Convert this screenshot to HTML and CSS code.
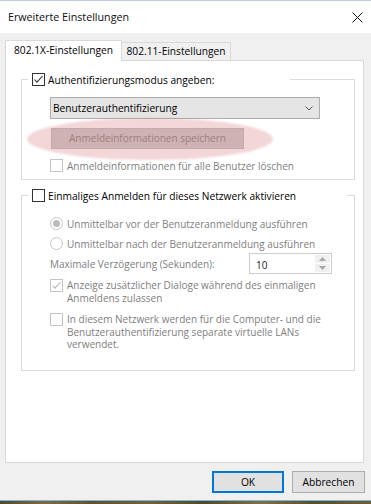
FILE: index.html
```html
<!DOCTYPE html>
<html lang="de">
<head>
<meta charset="utf-8">
<title>Erweiterte Einstellungen</title>
<link rel="stylesheet" href="styles.css">
</head>
<body>
<div class="window">
  <div class="titlebar">
    <span class="title">Erweiterte Einstellungen</span>
    <svg class="close" width="11" height="11" viewBox="0 0 11 11"><path d="M0.5 0.5 L10.5 10.5 M10.5 0.5 L0.5 10.5" stroke="#111" stroke-width="1" fill="none"/></svg>
  </div>
  <div class="client">
    <div class="tabs">
      <div class="tab tab-active">802.1X-Einstellungen</div>
      <div class="tab tab-inactive">802.11-Einstellungen</div>
    </div>
    <div class="panel">
      <fieldset class="group group-auth">
        <legend class="legend legend-auth">
          <span class="legend-inner">
            <svg class="box" width="13" height="13" viewBox="0 0 13 13"><rect x="0.5" y="0.5" width="12" height="12" fill="#fff" stroke="#333"/><path d="M2.5 6.5 L5 9.2 L10.5 3" stroke="#333" stroke-width="1.1" fill="none"/></svg>
            <span class="legend-text">Authentifizierungsmodus angeben:</span>
          </span>
        </legend>
        <div class="group-body body-auth">
          <div class="select">
            <span>Benutzerauthentifizierung</span>
            <svg class="chev" width="8" height="5" viewBox="0 0 8 5"><path d="M0.5 0.5 L4 4 L7.5 0.5" stroke="#555" stroke-width="1" fill="none"/></svg>
          </div>
          <div class="btn-wrap">
            <div class="btn-disabled">Anmeldeinformationen speichern</div>
            <div class="highlight"></div>
          </div>
          <div class="row row-single">
            <svg class="box" width="13" height="13" viewBox="0 0 13 13"><rect x="0.5" y="0.5" width="12" height="12" fill="#fff" stroke="#c4c4c4"/></svg>
            <span class="label dis">Anmeldeinformationen für alle Benutzer löschen</span>
          </div>
        </div>
      </fieldset>

      <fieldset class="group group-sso">
        <legend class="legend legend-sso">
          <span class="legend-inner">
            <svg class="box" width="13" height="13" viewBox="0 0 13 13"><rect x="0.5" y="0.5" width="12" height="12" fill="#fff" stroke="#333"/></svg>
            <span class="legend-text">Einmaliges Anmelden für dieses Netzwerk aktivieren</span>
          </span>
        </legend>
        <div class="group-body body-sso">
          <div class="row row-single row-radio1">
            <svg class="radio" width="13" height="13" viewBox="0 0 13 13"><circle cx="6.5" cy="6.5" r="6" fill="#fff" stroke="#c4c4c4"/><circle cx="6.5" cy="6.5" r="3.5" fill="#bcbcbc"/></svg>
            <span class="label dis">Unmittelbar vor der Benutzeranmeldung ausführen</span>
          </div>
          <div class="row row-single row-radio2">
            <svg class="radio" width="13" height="13" viewBox="0 0 13 13"><circle cx="6.5" cy="6.5" r="6" fill="#fff" stroke="#c4c4c4"/></svg>
            <span class="label dis">Unmittelbar nach der Benutzeranmeldung ausführen</span>
          </div>
          <div class="spin-row">
            <span class="spin-label dis">Maximale Verzögerung (Sekunden):</span>
            <div class="spin">
              <span class="spin-value">10</span>
              <div class="spin-buttons">
                <div class="spin-btn"><svg width="7" height="4" viewBox="0 0 7 4"><path d="M0 4 L3.5 0 L7 4 Z" fill="#a8a8a8"/></svg></div>
                <div class="spin-btn"><svg width="7" height="4" viewBox="0 0 7 4"><path d="M0 0 L3.5 4 L7 0 Z" fill="#a8a8a8"/></svg></div>
              </div>
            </div>
          </div>
          <div class="row row-multi row-dialogs">
            <svg class="box" width="13" height="13" viewBox="0 0 13 13"><rect x="0.5" y="0.5" width="12" height="12" fill="#fff" stroke="#c4c4c4"/><path d="M2.5 6.5 L5 9.2 L10.5 3" stroke="#b4b4b4" stroke-width="1.1" fill="none"/></svg>
            <span class="label dis">Anzeige zusätzlicher Dialoge während des einmaligen<br>Anmeldens zulassen</span>
          </div>
          <div class="row row-multi row-vlan">
            <svg class="box" width="13" height="13" viewBox="0 0 13 13"><rect x="0.5" y="0.5" width="12" height="12" fill="#fff" stroke="#c4c4c4"/></svg>
            <span class="label dis">In diesem Netzwerk werden für die Computer- und die<br>Benutzerauthentifizierung separate virtuelle LANs<br>verwendet.</span>
          </div>
        </div>
      </fieldset>
    </div>
    <div class="buttons">
      <div class="button button-default">OK</div>
      <div class="button">Abbrechen</div>
    </div>
  </div>
</div>
<div class="desktop"></div>
</body>
</html>
```

FILE: styles.css
```css
* { box-sizing: border-box; }

html, body {
  margin: 0;
  padding: 0;
}

body {
  width: 371px;
  height: 504px;
  overflow: hidden;
  font-family: "Open Sans", "Noto Sans", sans-serif;
  font-size: 10px;
  color: #000;
  background: #5d5535;
}

.window {
  height: 501px;
  border-top: 1px solid #bccde2;
  border-bottom: 1px solid #89afdb;
  background: #f0f0f0;
  display: flex;
  flex-direction: column;
}

.titlebar {
  height: 32px;
  flex: none;
  background: #fff;
  display: flex;
  align-items: center;
  justify-content: space-between;
  padding: 0 8px 0 8px;
}

.title {
  font-size: 10.7px;
  color: #111;
}

.close { display: block; }

.client {
  flex: 1;
  padding: 7px 7px 0 5px;
  display: flex;
  flex-direction: column;
}

.tabs {
  height: 20px;
  display: flex;
  align-items: flex-end;
  flex: none;
}

.tab {
  border: 1px solid #d9d9d9;
  border-bottom: none;
  text-align: center;
  white-space: nowrap;
  font-size: 10.2px;
}

.tab-active {
  width: 117px;
  height: 21px;
  margin-bottom: -1px;
  background: #fff;
  position: relative;
  z-index: 1;
  line-height: 19px;
}

.tab-inactive {
  width: 109px;
  height: 18px;
  border-left: none;
  background: #f0f0f0;
  line-height: 17px;
}

.panel {
  width: 359px;
  height: 403px;
  flex: none;
  border: 1px solid #d9d9d9;
  background: #fff;
  padding-left: 15px;
  display: flex;
  flex-direction: column;
}

.group {
  width: 334px;
  margin: 0;
  padding: 0;
  border: 1px solid #dcdcdc;
  min-inline-size: 0;
}

.group-auth { margin-top: 11px; }
.group-sso { margin-top: 8px; }

.legend {
  margin-left: 6px;
  padding: 0 0 0 4px;
  height: 15px;
}

.legend-auth { width: 262px; }
.legend-sso { width: 319px; }

.legend-inner {
  display: flex;
  align-items: center;
  height: 15px;
  gap: 3px;
  white-space: nowrap;
  font-size: 10.2px;
}

.box, .radio {
  display: block;
  flex: none;
}

.group-body {
  padding-left: 28px;
  display: flex;
  flex-direction: column;
}

.body-auth { padding-top: 10px; padding-bottom: 6px; }
.body-sso { padding-top: 13px; padding-bottom: 19px; }

.select {
  width: 270px;
  height: 22px;
  border: 1px solid #adadad;
  background: #e5e5e5;
  display: flex;
  align-items: center;
  justify-content: space-between;
  padding: 0 6px 0 2px;
  font-size: 10.2px;
}

.chev { display: block; }

.btn-wrap {
  position: relative;
  width: 193px;
  height: 21px;
  margin: 9px 0 0 1px;
}

.btn-disabled {
  height: 21px;
  border: 1px solid #bfbfbf;
  background: #cccccc;
  color: #838383;
  text-align: center;
  line-height: 19px;
}

.highlight {
  position: absolute;
  left: -24px;
  top: -10px;
  width: 246px;
  height: 42px;
  border-radius: 50%;
  background: rgba(214, 120, 126, 0.3);
  filter: blur(1px);
  pointer-events: none;
}

.row {
  display: flex;
  gap: 4px;
}

.row-single {
  height: 15px;
  align-items: center;
}

.body-auth .row-single { margin-top: 9px; }

.row-radio2 { margin-top: 5px; }

.row-multi {
  align-items: flex-start;
  line-height: 12.5px;
}

.row-dialogs { margin-top: 5px; }
.row-vlan { margin-top: 9px; }

.label { white-space: nowrap; }

.dis { color: #7e7e7e; }

.spin-row {
  margin-top: 2px;
  height: 21px;
  display: flex;
  align-items: center;
}

.spin-label {
  width: 199px;
  flex: none;
  white-space: nowrap;
}

.spin {
  width: 83px;
  height: 21px;
  border: 1px solid #cccccc;
  background: #fff;
  display: flex;
  align-items: center;
  justify-content: space-between;
}

.spin-value {
  padding-left: 6px;
  color: #222;
  padding-top: 2px;
}

.spin-buttons {
  width: 17px;
  height: 19px;
  display: flex;
  flex-direction: column;
  gap: 1px;
  padding: 1px;
}

.spin-btn {
  flex: 1;
  background: #f0f0f0;
  display: flex;
  align-items: center;
  justify-content: center;
}

.spin-btn svg { display: block; }

.buttons {
  margin-top: 8px;
  margin-right: -1px;
  display: flex;
  justify-content: flex-end;
  gap: 8px;
  font-size: 10.2px;
}

.button {
  width: 73px;
  height: 22px;
  border: 1px solid #adadad;
  background: #e1e1e1;
  text-align: center;
  line-height: 20px;
}

.button-default {
  width: 72px;
  border: 2px solid #0078d7;
  line-height: 18px;
}

.desktop {
  height: 3px;
  background: linear-gradient(90deg, #4f4a2c 0%, #7a6d40 12%, #5a5430 25%, #6f6439 40%, #4e4b2b 55%, #7d7243 70%, #55502e 85%, #6b6138 100%);
}
```
